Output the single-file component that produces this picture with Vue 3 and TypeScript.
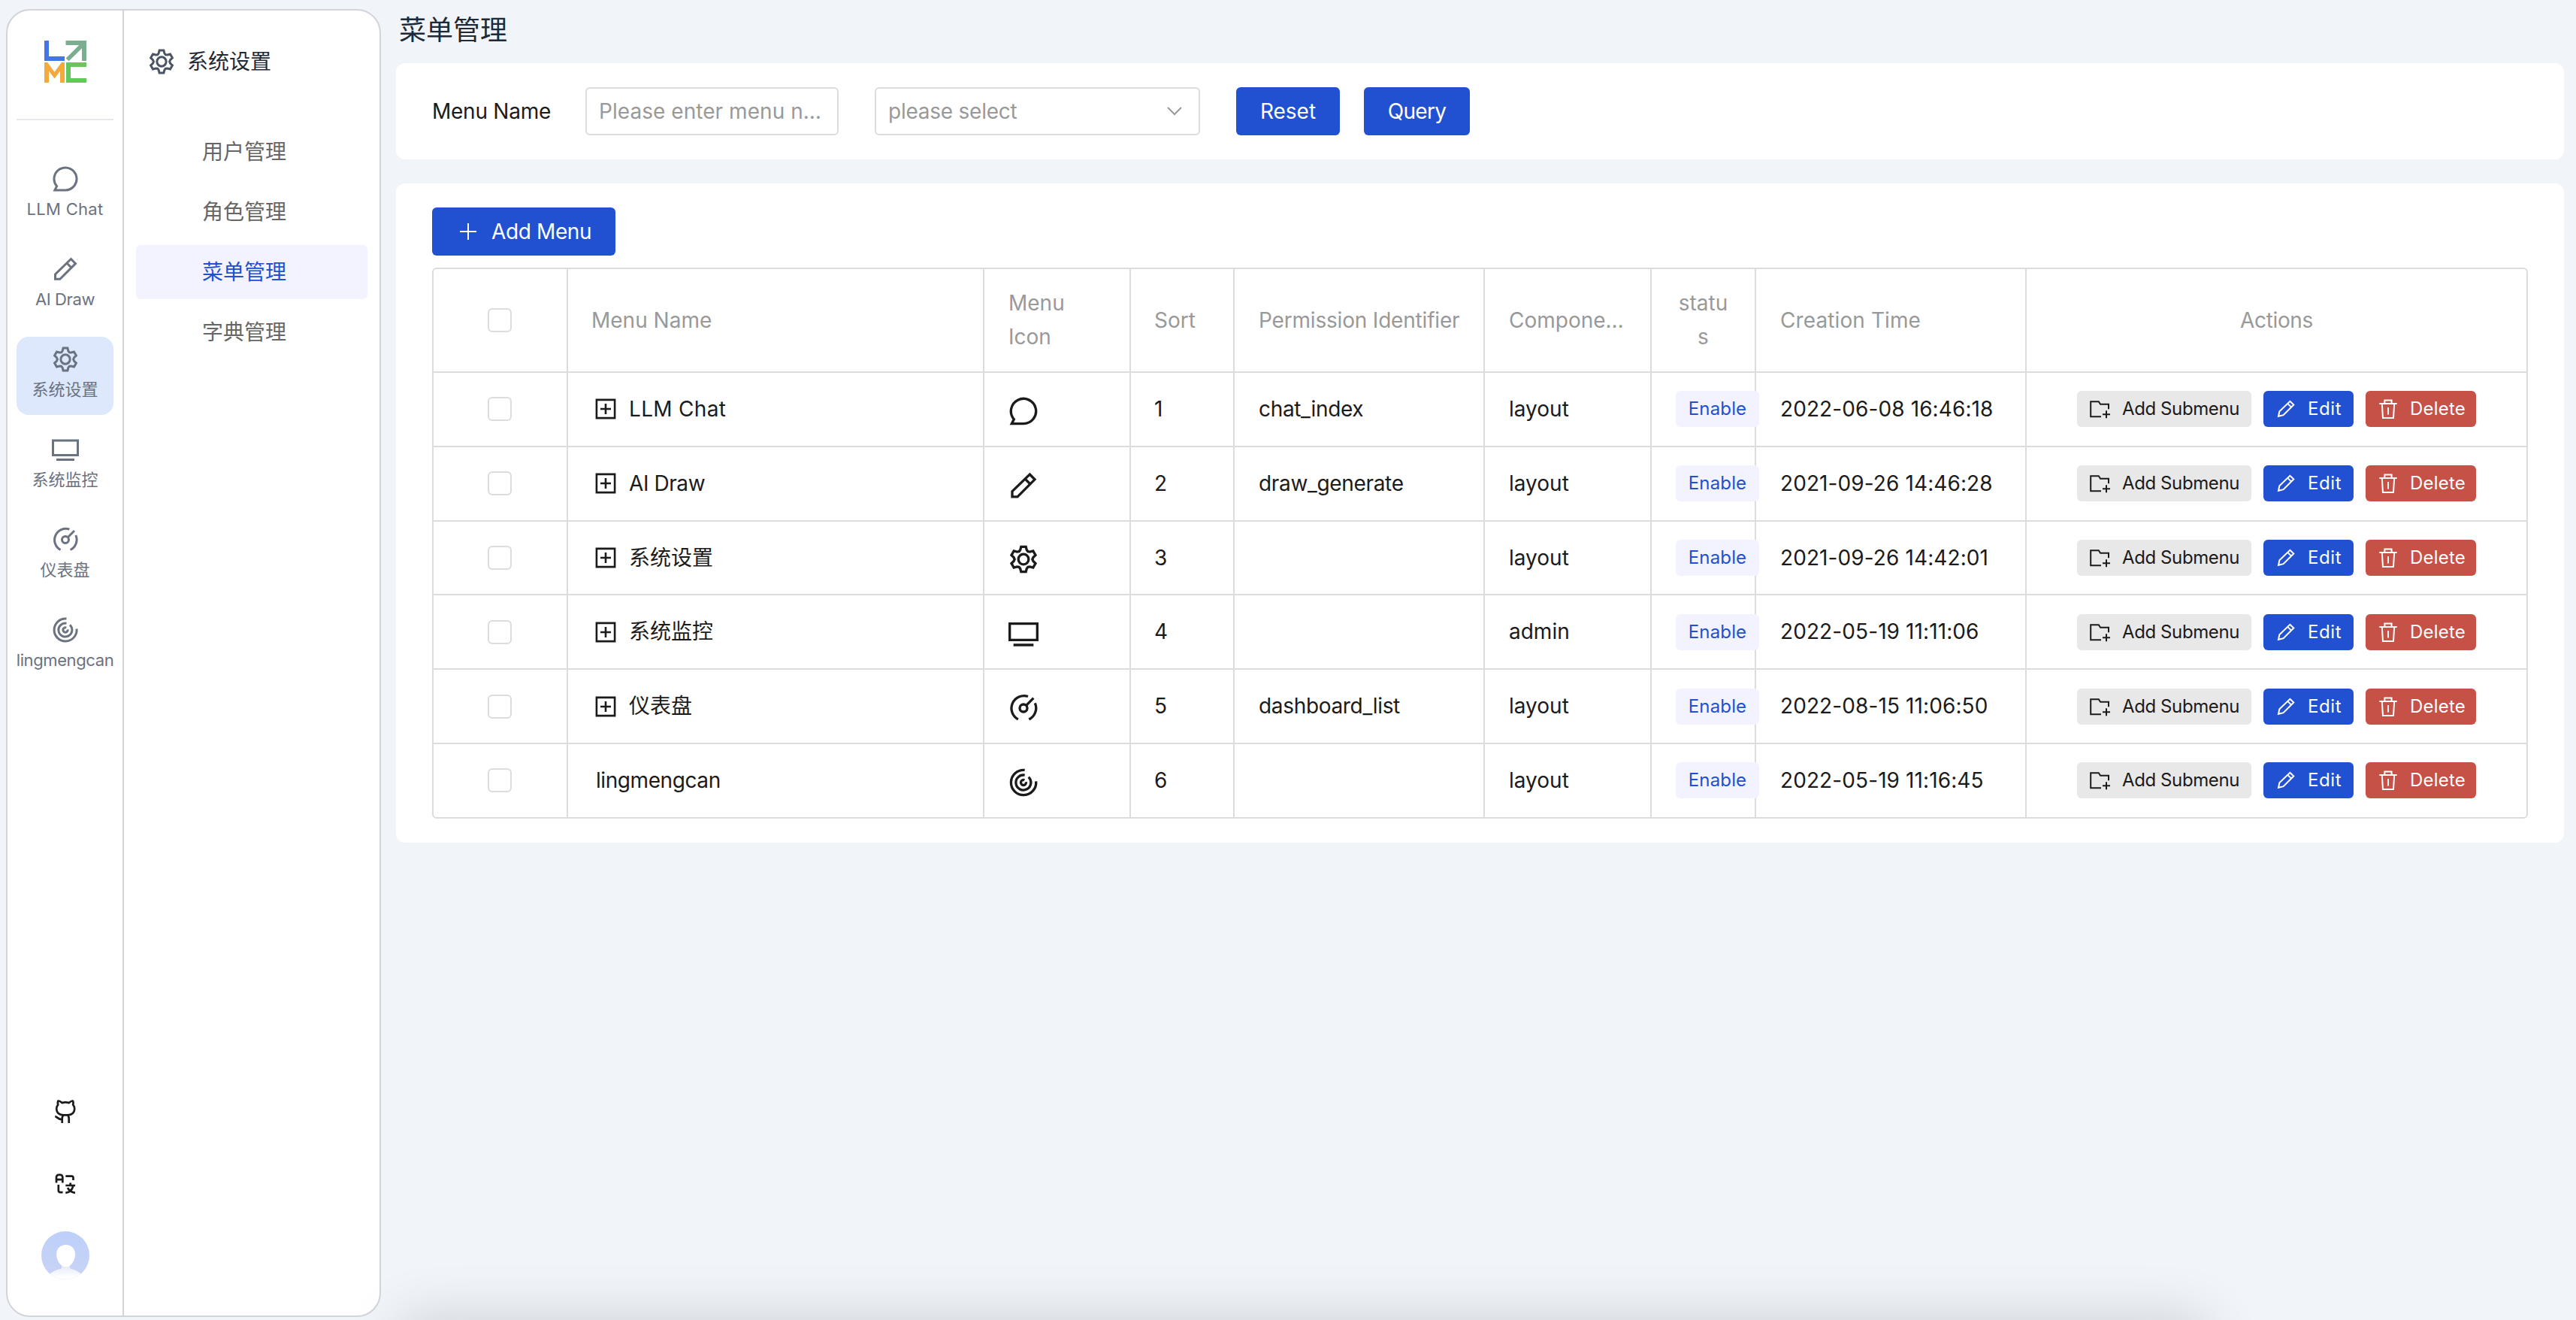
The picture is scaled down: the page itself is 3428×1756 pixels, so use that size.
<script setup lang="ts">
import { h, type FunctionalComponent } from 'vue'

function gearOutline(): string {
  const points: string[] = []
  const at = (radius: number, degrees: number) => {
    const a = (degrees * Math.PI) / 180
    return `${(12 + radius * Math.cos(a)).toFixed(2)} ${(12 + radius * Math.sin(a)).toFixed(2)}`
  }
  for (let i = 0; i < 6; i++) {
    const c = -90 + i * 60
    points.push(at(7.9, c - 19), at(10.15, c - 11), at(10.15, c + 11), at(7.9, c + 19), at(7.1, c + 30))
  }
  return 'M' + points.join('L') + 'z'
}

const glyphs: Record<string, string> = {
  chat: 'M12 22a10 10 0 1 0-7.6-3.5L2.6 22z',
  pencil: 'M17 3l4 4.1L7.2 20.9H3v-4.3zM13.3 6.7l4.1 4.1',
  gear: gearOutline() + 'M16.1 12a4.1 4.1 0 1 1-8.2 0a4.1 4.1 0 1 1 8.2 0z',
  screen: 'M1 4h22v13H1zM4 21h16',
  gauge: 'M7.7 21A10 10 0 0 1 15.6 2.7M21.2 8a10 10 0 0 1-4.8 13M14.2 9.8l5.8-5.8M15 12a3 3 0 1 1-6 0a3 3 0 1 1 6 0z',
  spiral: 'M13 2.05A10 10 0 1 0 22 11M13 6.1a6 6 0 1 0 3 1.5M12.8 10.050a2.100 2.100 0 1 0 1.250 1.500',
}

const Icon: FunctionalComponent<{ name: string }> = (props) =>
  h('svg', { viewBox: '0 0 24 24', fill: 'none', stroke: 'currentColor', 'stroke-width': 2 }, [
    h('path', { d: glyphs[props.name] }),
  ])
Icon.props = ['name']

const modules = [
  { title: 'LLM Chat', icon: 'chat', cls: 'wide' },
  { title: 'AI Draw', icon: 'pencil', cls: 'tight' },
  { title: '系统设置', icon: 'gear', cls: 'cjk', active: true },
  { title: '系统监控', icon: 'screen', cls: 'cjk' },
  { title: '仪表盘', icon: 'gauge', cls: 'cjk' },
  { title: 'lingmengcan', icon: 'spiral', cls: 'tight' },
]

const pages = ['用户管理', '角色管理', '菜单管理', '字典管理']
const currentPage = '菜单管理'

const columns = [
  { key: 'check', title: '' },
  { key: 'name', title: 'Menu Name' },
  { key: 'icon', title: 'Menu\nIcon' },
  { key: 'sort', title: 'Sort' },
  { key: 'perm', title: 'Permission Identifier' },
  { key: 'comp', title: 'Compone…' },
  { key: 'status', title: 'statu\ns' },
  { key: 'time', title: 'Creation Time' },
  { key: 'actions', title: 'Actions' },
]

const rows = [
  { name: 'LLM Chat', cls: 'wide', icon: 'chat', perm: 'chat_index', comp: 'layout', time: '2022-06-08 16:46:18', nested: true },
  { name: 'AI Draw', cls: 'tight', icon: 'pencil', perm: 'draw_generate', comp: 'layout', time: '2021-09-26 14:46:28', nested: true },
  { name: '系统设置', cls: 'cjk', icon: 'gear', perm: '', comp: 'layout', time: '2021-09-26 14:42:01', nested: true },
  { name: '系统监控', cls: 'cjk', icon: 'screen', perm: '', comp: 'admin', time: '2022-05-19 11:11:06', nested: true },
  { name: '仪表盘', cls: 'cjk', icon: 'gauge', perm: 'dashboard_list', comp: 'layout', time: '2022-08-15 11:06:50', nested: true },
  { name: 'lingmengcan', cls: 'tight', icon: 'spiral', perm: '', comp: 'layout', time: '2022-05-19 11:16:45', nested: false },
]
</script>

<template>
  <div class="app">
    <aside class="sidebar">
      <nav class="rail">
        <div class="brand">
          <svg class="logo" viewBox="0 0 56 56">
            <path fill="#4574e8" d="M0 0h6v21h21v6H0z" />
            <path fill="#7bae90" d="M28.5 0H56v27h-6V10.2L32.6 27.3l-3.9-3.9L46.2 6H28.5z" />
            <path fill="#f3a93c" d="M0 29h4.2l9.3 12.8L22.8 29H27v27h-6V40.5l-7.5 10L6 40.5V56H0z" />
            <path fill="#67c65d" d="M29 29h27v6H35v15h21v6H29z" />
          </svg>
        </div>
        <div class="modules">
          <div v-for="m in modules" :key="m.title" class="module" :class="{ active: m.active }">
            <Icon class="module-icon" :name="m.icon" />
            <span :class="m.cls">{{ m.title }}</span>
          </div>
        </div>
        <div class="tools">
          <svg class="tool" viewBox="0 0 36 36">
            <path d="M8.3 3.6C9.5 3 12 4.7 13.7 6.1c2.8-.8 6.2-.8 9 0C24.5 4.7 27 3 28 3.6c.8 1.6.6 3.4.2 5 1.4 1.6 2.1 3.4 2 5.9-.2 5.3-3.7 7.6-9.2 7.9h-5.600C9.900 22.100 6.400 19.800 6.200 14.500c-.1-2.500.6-4.300 2-5.900-.4-1.600-.6-3.400.1-5z" />
            <path d="M13.700 33v-6c0-2 .3-3.400 1.700-4.600M21 22.400c1.400 1.200 1.700 2.600 1.700 4.600v6M4.300 24c2.800.6 3.600 4.300 9.400 4.300" />
          </svg>
          <svg class="tool lang" viewBox="0 0 36 36">
            <path d="M6 16.5V9a3.2 3.2 0 0 1 3.2-3.2h1.9A3.2 3.2 0 0 1 14.3 9v7.5M6 12.2h8.3M18.3 7.6h7.9a2.3 2.3 0 0 1 2.3 2.3V13M8.8 19v7.8a2.3 2.3 0 0 0 2.3 2.3h3.4M24.7 16.6v3.2M18.3 20h12.8M28.3 20.4c-1 5.2-4.6 8.6-10 9.5M21 23.2c1.8 3.6 5.2 6 10 6.7" />
          </svg>
          <svg class="avatar" viewBox="0 0 64 64">
            <defs>
              <linearGradient id="avatar-bg" x1="0" y1="0" x2="0" y2="1">
                <stop offset="0" stop-color="#bdd0f9" />
                <stop offset="1" stop-color="#c9d3f5" />
              </linearGradient>
              <linearGradient id="avatar-body" x1="0" y1="0" x2="0" y2="1">
                <stop offset="0" stop-color="#e3e8fa" />
                <stop offset="0.8" stop-color="#ffffff" />
              </linearGradient>
              <clipPath id="avatar-clip"><circle cx="32" cy="32" r="32" /></clipPath>
            </defs>
            <g clip-path="url(#avatar-clip)">
              <rect width="64" height="64" fill="url(#avatar-bg)" />
              <path fill="url(#avatar-body)" d="M27 45h11v3.5q0 1.2 1.5 1.4Q47 51.3 53 57v8H11v-8q6-5.7 14.500-7.100 1.500-.2 1.500-1.400z" />
              <path fill="#fff" d="M32.6 18c7.3 0 12.4 5 12.4 12.5 0 8.5-5.6 16.900-12.400 16.900S20.100 39 20.100 30.500C20.100 23 25.300 18 32.600 18z" />
            </g>
          </svg>
        </div>
      </nav>
      <section class="submenu">
        <header class="submenu-head">
          <Icon class="submenu-icon" name="gear" />
          <span>系统设置</span>
        </header>
        <div class="pages">
          <div v-for="p in pages" :key="p" class="page" :class="{ active: p === currentPage }">{{ p }}</div>
        </div>
      </section>
    </aside>

    <main class="main">
      <h1 class="title">菜单管理</h1>

      <section class="card filters">
        <label class="label">Menu Name</label>
        <div class="input">Please enter menu n…</div>
        <div class="select">
          <span>please select</span>
          <svg class="chevron" viewBox="0 0 20 12"><path d="M1 1l9 9 9-9" /></svg>
        </div>
        <button class="btn reset">Reset</button>
        <button class="btn query">Query</button>
      </section>

      <section class="card list">
        <button class="btn add">
          <svg class="plus" viewBox="0 0 22 22"><path d="M11 0v22M0 11h22" /></svg>
          <span>Add Menu</span>
        </button>

        <div class="table">
          <div class="row head">
            <div v-for="c in columns" :key="c.key" class="cell" :class="c.key">
              <i v-if="c.key === 'check'" class="checkbox"></i>
              <span v-else>{{ c.title }}</span>
            </div>
          </div>
          <div v-for="(r, i) in rows" :key="r.name" class="row">
            <div class="cell check"><i class="checkbox"></i></div>
            <div class="cell name">
              <svg v-if="r.nested" class="expand" viewBox="0 0 28 28">
                <path d="M1.900 1.900h24.200v24.200H1.900zM14 7v14M7 14h14" />
              </svg>
              <span :class="[r.cls, { leaf: !r.nested }]">{{ r.name }}</span>
            </div>
            <div class="cell icon"><Icon class="row-icon" :name="r.icon" /></div>
            <div class="cell sort">{{ i + 1 }}</div>
            <div class="cell perm">{{ r.perm }}</div>
            <div class="cell comp">{{ r.comp }}</div>
            <div class="cell status"><span class="tag">Enable</span></div>
            <div class="cell time">{{ r.time }}</div>
            <div class="cell actions">
              <button class="small sub">
                <svg viewBox="0 0 28 28"><path d="M16 24.300H2.200V4.300h10.600l2.300 3.500H26v6.400M23 16.200v10M18 21.200h10" /></svg>
                <span>Add Submenu</span>
              </button>
              <button class="small edit">
                <svg viewBox="0 0 28 28"><path d="M4 23.800l1.400-6.600L19.400 3.800l4.900 4.700-13.700 13.600zM16.300 6.900l4.800 4.700" /></svg>
                <span>Edit</span>
              </button>
              <button class="small del">
                <svg viewBox="0 0 28 28"><path d="M2.300 6.900h23.400M9.400 6.500V2.400h9.200v4.100M5.800 7l1.200 19h14l1.200-19M14 12v9.500" /></svg>
                <span>Delete</span>
              </button>
            </div>
          </div>
        </div>
      </section>
    </main>
    <div class="dock-shadow"></div>
  </div>
</template>

<style>
body {
  margin: 0;
  background: #f1f5fa;
}
</style>

<style scoped>
.app {
  position: relative;
  box-sizing: border-box;
  display: flex;
  gap: 20px;
  width: 3428px;
  height: 1756px;
  padding: 0 16px 0 8px;
  overflow: hidden;
  background: #f1f5fa;
  color: #1b1b1b;
  font: 28px/44.8px Inter, "Noto Sans CJK SC", sans-serif;
  white-space: nowrap;
}
.app *,
.app *::before {
  box-sizing: border-box;
}
svg {
  display: block;
  flex: none;
}

/* Sidebar */
.sidebar {
  display: flex;
  flex: none;
  width: 499px;
  height: 1740px;
  margin-top: 12px;
  border: 2px solid #d1d5db;
  border-radius: 32px;
  background: #fff;
  overflow: hidden;
}
.rail {
  display: flex;
  flex-direction: column;
  flex: none;
  width: 155px;
  padding: 0 12px 48px;
  border-right: 2px solid #d1d5db;
}
.brand {
  height: 146px;
  padding: 40px 0 0 37px;
  border-bottom: 2px solid #e5e7eb;
}
.logo {
  width: 56px;
  height: 56px;
}
.modules {
  display: flex;
  flex-direction: column;
  gap: 16px;
  padding-top: 48px;
}
.module {
  display: flex;
  flex-direction: column;
  align-items: center;
  height: 104px;
  padding-top: 12px;
  border-radius: 16px;
  color: #6b7280;
  font-size: 22px;
  line-height: 24px;
}
.module.active {
  background: #dde8fc;
}
.module .tight {
  letter-spacing: -0.39px;
}
.module .wide {
  letter-spacing: 0.3px;
}
.module-icon {
  width: 36px;
  height: 36px;
  margin: 0 0 10px 1px;
}
.tools {
  display: flex;
  flex-direction: column;
  align-items: center;
  margin-top: auto;
  padding-left: 1px;
}
.tool {
  width: 36px;
  height: 36px;
  margin-bottom: 60px;
  fill: none;
  stroke: #1b1b1b;
  stroke-width: 2.7;
}
.tool.lang {
  margin-bottom: 45px;
}
.avatar {
  width: 64px;
  height: 64px;
}
.submenu {
  flex: 1;
  padding: 0 16px;
}
.submenu-head {
  display: flex;
  align-items: center;
  gap: 16px;
  height: 136px;
  padding-left: 16px;
  color: #1f2937;
}
.submenu-icon {
  width: 36px;
  height: 36px;
  color: #4b5563;
}
.pages {
  display: flex;
  flex-direction: column;
  gap: 8px;
  padding-top: 16px;
}
.page {
  height: 72px;
  padding-left: 88px;
  border-radius: 6px;
  color: #666;
  line-height: 72px;
}
.page.active {
  background: #f2f3ff;
  color: #2150d1;
}

/* Content */
.main {
  flex: 1;
}
.title {
  height: 84px;
  margin: 0;
  padding-left: 4px;
  color: #1f2937;
  font-size: 36px;
  font-weight: 400;
  line-height: 80px;
}
.card {
  border-radius: 12px;
  background: #fff;
}
.filters {
  display: flex;
  height: 128px;
  margin-bottom: 32px;
  padding: 32px 48px;
  line-height: 64px;
}
.label {
  width: 204px;
  letter-spacing: -0.25px;
}
.input,
.select {
  height: 64px;
  border: 2px solid #dcdcdc;
  border-radius: 6px;
  color: #999;
  line-height: 60px;
}
.input {
  width: 337px;
  padding-left: 16px;
  letter-spacing: 0.05px;
}
.select {
  display: flex;
  align-items: center;
  justify-content: space-between;
  width: 433px;
  margin: 0 48px;
  padding: 0 22px 0 16px;
  letter-spacing: -0.24px;
}
.chevron {
  width: 20px;
  height: 12px;
  margin-bottom: 1px;
  fill: none;
  stroke: #999;
  stroke-width: 2;
}
.btn {
  height: 64px;
  padding: 0;
  border: 0;
  border-radius: 6px;
  background: #2150d1;
  color: #fff;
  font: inherit;
  line-height: 64px;
}
.reset {
  width: 138px;
}
.query {
  width: 141px;
  margin-left: 32px;
  letter-spacing: -0.7px;
}
.list {
  padding: 32px 48px;
}
.add {
  display: flex;
  align-items: center;
  gap: 20px;
  width: 244px;
  margin-bottom: 16px;
  padding-left: 37px;
  letter-spacing: -0.38px;
}
.plus {
  width: 22px;
  height: 22px;
  fill: none;
  stroke: #fff;
  stroke-width: 2;
}

/* Table */
.table {
  width: 2789px;
  height: 733px;
  border: 2px solid #dcdcdc;
  border-radius: 6px;
  overflow: hidden;
}
.row {
  display: grid;
  grid-template-columns: 179px 554px 195px 138px 333px 222px 139px 360px 665px;
  height: 98.8px;
  border-bottom: 2px solid #dcdcdc;
}
.row.head {
  height: 138px;
  color: #999;
  white-space: pre-line;
}
.row:last-child {
  border-bottom: 0;
}
.cell {
  display: flex;
  align-items: center;
  min-width: 0;
  padding-left: 31px;
  border-right: 2px solid #dcdcdc;
}
.row:last-child .cell {
  height: 97px;
}
.cell.check {
  justify-content: center;
  padding: 0 1px 0 0;
}
.checkbox {
  width: 32px;
  height: 32px;
  border: 2px solid #dcdcdc;
  border-radius: 6px;
}
.cell.name {
  padding-left: 31px;
}
.cell.name .wide {
  letter-spacing: 0.3px;
}
.cell.name .tight {
  letter-spacing: -0.42px;
}
.cell.name .leaf {
  margin-left: 6px;
}
.expand {
  width: 28px;
  height: 28px;
  margin: 0 17px 0 5px;
  fill: none;
  stroke: #1b1b1b;
  stroke-width: 2.6;
}
.head .icon {
  padding-left: 32px;
}
.row-icon {
  width: 40px;
  height: 40px;
  margin: 5px 0 0 1px;
}
.cell.perm {
  padding-left: 32px;
  letter-spacing: -0.33px;
}
.head .perm {
  letter-spacing: -0.19px;
}
.cell.comp {
  padding-left: 32px;
}
.head .status {
  justify-content: center;
  padding: 0;
  text-align: center;
}
.tag {
  position: relative;
  flex: none;
  width: 111px;
  height: 48px;
  margin-left: 1px;
  border-radius: 6px;
  background: #f2f3ff;
  color: #2150d1;
  font-size: 24px;
  line-height: 48px;
  letter-spacing: 0.15px;
  text-align: center;
}
.cell.time {
  padding-left: 32px;
  letter-spacing: 0.1px;
}
.cell.actions {
  justify-content: center;
  gap: 16px;
  padding: 0;
  border-right: 0;
}
.head .actions {
  letter-spacing: -0.35px;
}
.small {
  display: flex;
  align-items: center;
  gap: 14px;
  height: 48px;
  padding: 0 0 0 16px;
  border: 0;
  border-radius: 6px;
  color: #fff;
  font: inherit;
  font-size: 24px;
  line-height: 48px;
}
.small svg {
  width: 28px;
  height: 28px;
  fill: none;
  stroke: currentColor;
  stroke-width: 2;
}
.sub {
  gap: 16px;
  width: 232px;
  background: #e8e8e8;
  color: #1b1b1b;
  letter-spacing: -0.4px;
}
.edit {
  gap: 15px;
  width: 120px;
  background: #2150d1;
  letter-spacing: 0.6px;
}
.del {
  gap: 15px;
  width: 147px;
  background: #c65147;
  letter-spacing: 0.2px;
}

/* Soft shade cast from below the window edge */
.dock-shadow {
  position: absolute;
  top: 100%;
  left: 534px;
  width: 2400px;
  height: 200px;
  box-shadow: 0 0 78px rgba(0, 0, 0, 0.16);
  pointer-events: none;
}
</style>
